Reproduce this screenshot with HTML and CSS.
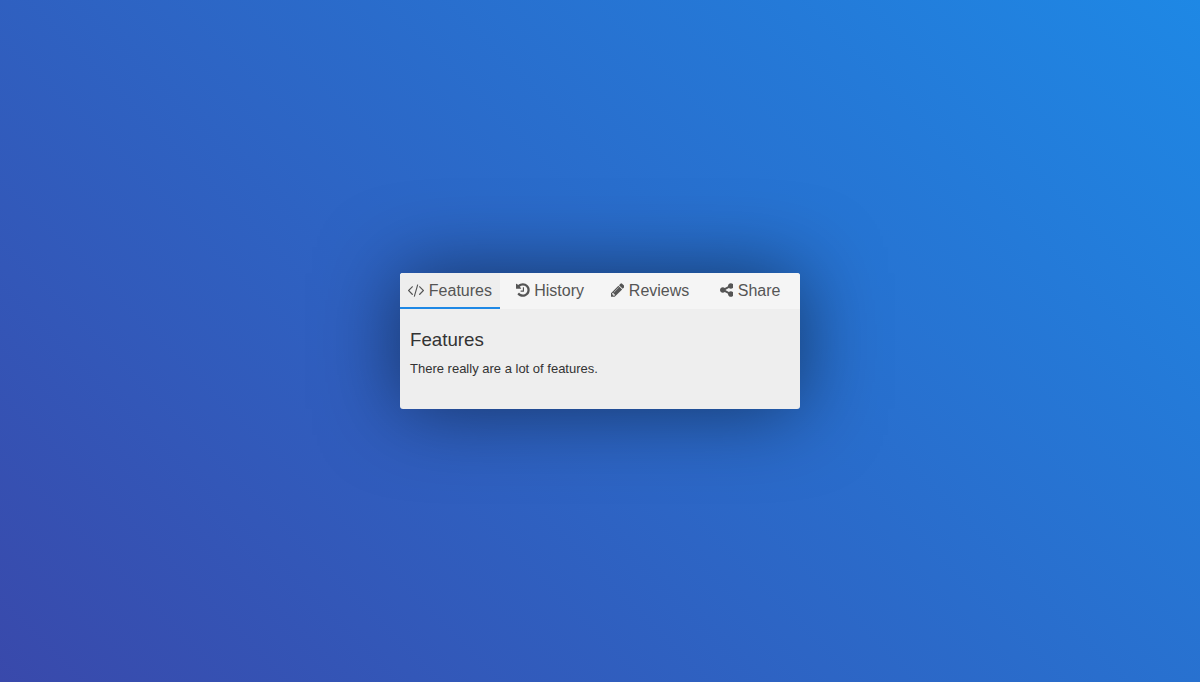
FILE: index.html
```html
<!DOCTYPE html>
<html lang="en">
<head>
<meta charset="utf-8">
<title>Tabs</title>
<link rel="stylesheet" href="styles.css">
</head>
<body>
<main class="card">
  <nav class="tabs">
    <a class="tab active" href="#features"><svg class="icon code" viewBox="0 0 1830 1792"><path d="M553 1399l-50 50q-10 10-23 10t-23-10l-466-466q-10-10-10-23t10-23l466-466q10-10 23-10t23 10l50 50q10 10 10 23t-10 23l-393 393 393 393q10 10 10 23t-10 23zm591-1067l-373 1291q-4 13-15.5 19.5t-23.5 2.5l-62-17q-13-4-19.5-15.5t-2.5-24.5l373-1291q4-13 15.5-19.5t23.5-2.5l62 17q13 4 19.5 15.5t2.5 24.5zm657 651l-466 466q-10 10-23 10t-23-10l-50-50q-10-10-10-23t10-23l393-393-393-393q-10-10-10-23t10-23l50-50q10-10 23-10t23 10l466 466q10 10 10 23t-10 23z"/></svg> Features</a>
    <a class="tab" href="#history"><svg class="icon wide" viewBox="0 0 1536 1792"><path d="M1536 896q0 156-61 298t-164 245-245 164-298 61q-172 0-327-72.5t-264-204.5q-7-10-6.5-22.5t8.5-20.5l137-138q10-9 25-9 16 2 23 12 73 95 179 147t225 52q104 0 198.5-40.5t163.5-109.5 109.5-163.5 40.5-198.5-40.5-198.5-109.5-163.5-163.5-109.5-198.5-40.5q-98 0-188 35.5t-160 101.5l137 138q31 30 14 69-17 40-59 40h-448q-26 0-45-19t-19-45v-448q0-42 40-59 39-17 69 14l130 129q107-101 244.5-156.5t284.5-55.5q156 0 298 61t245 164 164 245 61 298zm-640-288v448q0 14-9 23t-23 9h-320q-14 0-23-9t-9-23v-64q0-14 9-23t23-9h224v-352q0-14 9-23t23-9h64q14 0 23 9t9 23z"/></svg> History</a>
    <a class="tab" href="#reviews"><svg class="icon wide" viewBox="0 0 1536 1792"><path d="M363 1536l91-91-235-235-91 91v107h128v128h107zm523-928q0-22-22-22-10 0-17 7l-542 542q-7 7-7 17 0 22 22 22 10 0 17-7l542-542q7-7 7-17zm-54-192l416 416-832 832h-416v-416zm683 96q0 53-37 90l-166 166-416-416 166-165q36-38 90-38 53 0 91 38l235 234q37 39 37 91z"/></svg> Reviews</a>
    <a class="tab" href="#share"><svg class="icon wide" viewBox="0 0 1536 1792"><path d="M1216 1024q133 0 226.500 93.500t93.500 226.500-93.500 226.500-226.500 93.500-226.500-93.500-93.500-226.500q0-12 2-34l-360-180q-92 86-218 86-133 0-226.500-93.500t-93.500-226.500 93.500-226.500 226.500-93.500q126 0 218 86l360-180q-2-22-2-34 0-133 93.500-226.500t226.500-93.500 226.500 93.500 93.500 226.500-93.500 226.500-226.500 93.500q-126 0-218-86l-360 180q2 22 2 34t-2 34l360 180q92-86 218-86z"/></svg> Share</a>
  </nav>
  <section class="panel">
    <h2 class="title">Features</h2>
    <p class="text">There really are a lot of features.</p>
  </section>
</main>
</body>
</html>
```
FILE: styles.css
```css
* { box-sizing: border-box; }
html, body { height: 100%; }
body {
  margin: 0;
  display: flex;
  align-items: center;
  justify-content: center;
  background: linear-gradient(45deg, #3949ab, #1e88e5);
  font-family: "Liberation Sans", Arial, sans-serif;
  color: #333;
}
.card {
  width: 400px;
  height: 136px;
  border-radius: 3px;
  overflow: hidden;
  background: #eee;
  box-shadow: 0 0 80px rgba(0, 0, 0, 0.5);
}
.tabs {
  display: flex;
  height: 36px;
  background: #f5f5f5;
}
.tab {
  flex: 1;
  height: 36px;
  line-height: 36px;
  text-align: center;
  white-space: nowrap;
  font-size: 16px;
  color: #555;
  text-decoration: none;
  border-bottom: 2px solid transparent;
}
.tab.active {
  background: #eee;
  border-bottom-color: #1e88e5;
}
.icon {
  display: inline-block;
  height: 16px;
  fill: currentColor;
  vertical-align: -2px;
}
.code { width: 16.340px; }
.wide { width: 13.710px; }
.panel { padding: 20px 10px 0; }
.title {
  margin: 0;
  font-size: 18.720px;
  line-height: 22px;
  font-weight: normal;
}
.text {
  margin: 10px 0 0;
  font-size: 13px;
  line-height: 16px;
}
```
